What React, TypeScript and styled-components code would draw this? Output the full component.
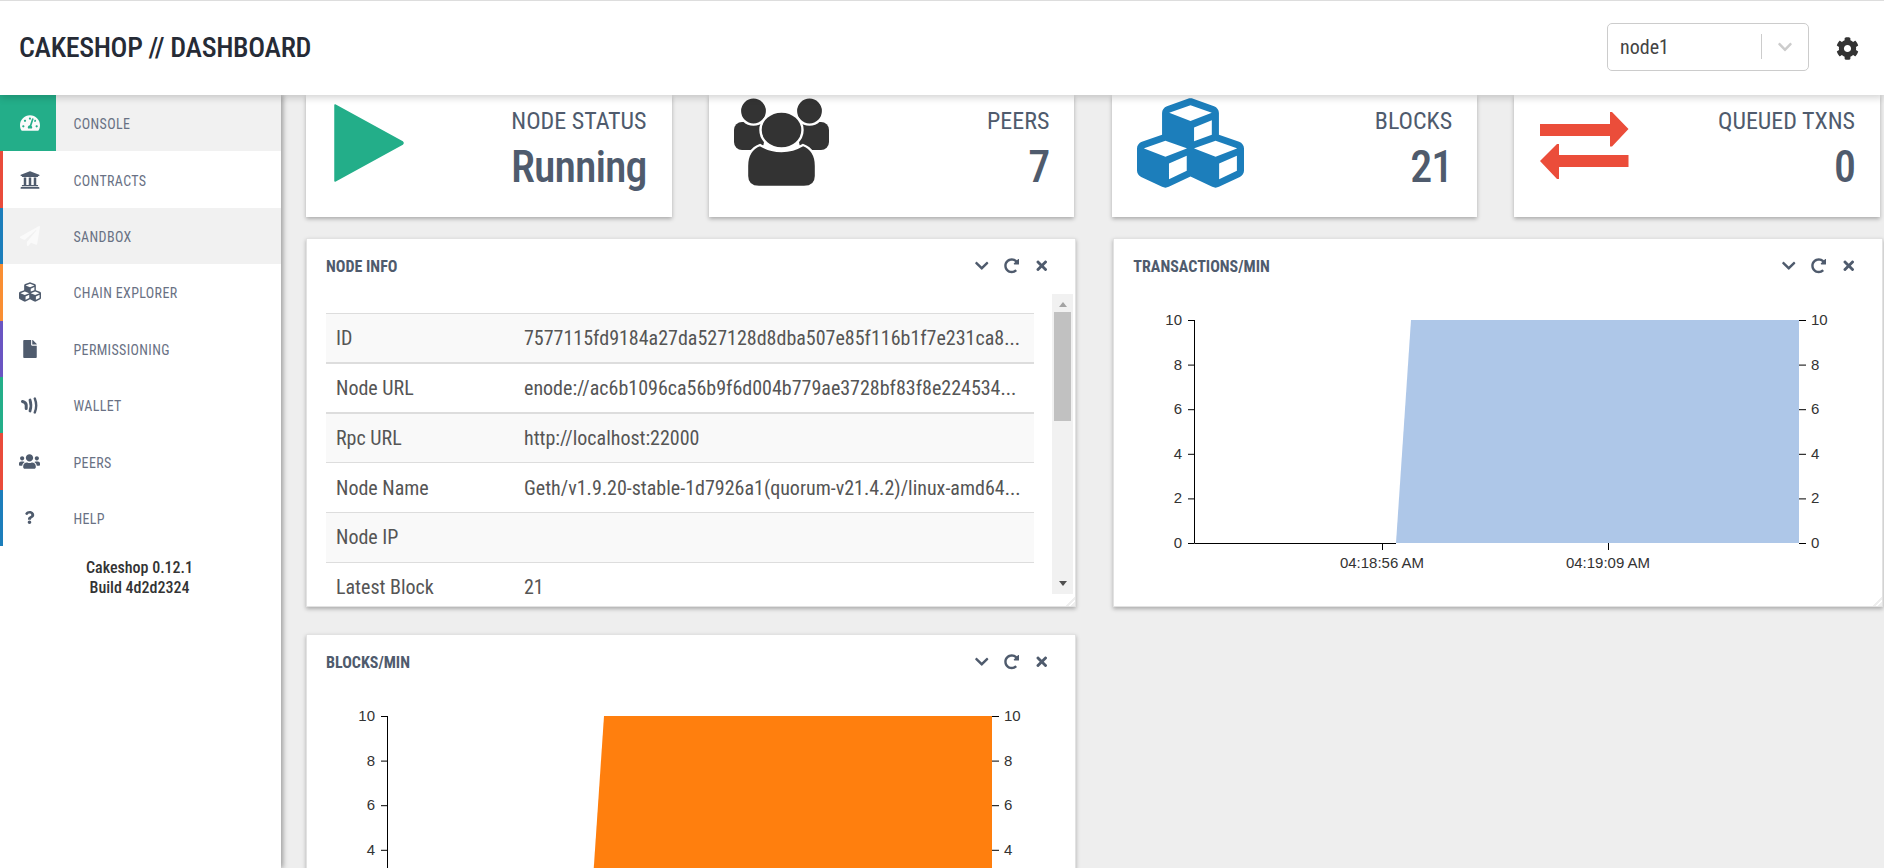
import type { ReactNode } from 'react';
import styled, { createGlobalStyle } from 'styled-components';
import {
  FaChevronDown,
  FaCog,
  FaCubes,
  FaFile,
  FaPaperPlane,
  FaQuestion,
  FaRedoAlt,
  FaTachometerAlt,
  FaTimes,
  FaUniversity,
  FaUsers,
} from 'react-icons/fa';

const GlobalStyle = createGlobalStyle`
  html, body {
    margin: 0;
    padding: 0;
    height: 100%;
    overflow: hidden;
    background: #eeeeee;
  }
  * { box-sizing: border-box; }
  body {
    font-family: Roboto, "Liberation Sans", sans-serif;
    font-stretch: 75%;
  }
`;

const WalletIcon = () => (
  <svg width="17" height="17" viewBox="0 0 17 17" fill="none" stroke="currentColor" strokeLinecap="round">
    <path d="M1.5 4.5 C3.5 5 5 6 5.2 8 L5.2 11.5" strokeWidth="3" />
    <path d="M9 3 C10.2 6.5 10.2 10.5 9 14" strokeWidth="2.8" />
    <path d="M13.8 1.5 C15.6 6 15.6 11 13.8 15.5" strokeWidth="2.4" />
  </svg>
);

const PlayIcon = () => (
  <svg width="70" height="78" viewBox="0 0 70 78">
    <path d="M1 1 L68.5 38 Q69.5 39 68.5 40 L1 77 Z" fill="#23ae89" stroke="#23ae89" strokeLinejoin="round" strokeWidth="1.5" />
  </svg>
);

const PeersIcon = () => (
  <svg width="95" height="90" viewBox="0 0 95 90" fill="#333333" stroke="#ffffff" strokeWidth="2.4">
    <rect x="0" y="24" width="30" height="28" rx="8" stroke="none" />
    <rect x="65" y="24" width="30" height="28" rx="8" stroke="none" />
    <circle cx="19.5" cy="13" r="13.6" />
    <circle cx="75.5" cy="13" r="13.6" />
    <path d="M13 68 Q13 52 26 47 Q36 53 47.5 53 Q59 53 69 47 Q82 52 82 68 V78 Q82 89 70 89 H25 Q13 89 13 78 Z" />
    <ellipse cx="47.5" cy="32" rx="21" ry="18.5" />
  </svg>
);

const ExchangeIcon = () => (
  <svg width="89" height="68" viewBox="0 0 89 68" fill="#eb4d3a">
    <polygon points="0,12 70,12 70,0 72,0 88.5,17 72,34.5 70,34.5 70,24 0,24" />
    <polygon points="88.5,43 19,43 19,32 17,32 0,49 17,67 19,67 19,55 88.5,55" />
  </svg>
);

type NavEntry = {
  label: string;
  color: string;
  icon: ReactNode;
  size?: number;
  shaded?: boolean;
  active?: boolean;
};

const NAV: NavEntry[] = [
  { label: 'Console', color: '#23ae89', icon: <FaTachometerAlt />, active: true, shaded: true },
  { label: 'Contracts', color: '#e94b3b', icon: <FaUniversity /> },
  { label: 'Sandbox', color: '#1c7ebb', icon: <FaPaperPlane />, shaded: true },
  { label: 'Chain Explorer', color: '#f98e33', icon: <FaCubes />, size: 22 },
  { label: 'Permissioning', color: '#6a55c2', icon: <FaFile />, size: 18 },
  { label: 'Wallet', color: '#23ae89', icon: <WalletIcon /> },
  { label: 'Peers', color: '#e94b3b', icon: <FaUsers />, size: 21 },
  { label: 'Help', color: '#1c7ebb', icon: <FaQuestion />, size: 13 },
];

const ROWS = [
  { name: 'ID', value: '7577115fd9184a27da527128d8dba507e85f116b1f7e231ca8...', thick: true },
  { name: 'Node URL', value: 'enode://ac6b1096ca56b9f6d004b779ae3728bf83f8e224534...', thick: true },
  { name: 'Rpc URL', value: 'http://localhost:22000' },
  { name: 'Node Name', value: 'Geth/v1.9.20-stable-1d7926a1(quorum-v21.4.2)/linux-amd64...' },
  { name: 'Node IP', value: '' },
  { name: 'Latest Block', value: '21' },
];

const PanelTools = () => (
  <Tools>
    <FaChevronDown />
    <FaRedoAlt />
    <FaTimes />
  </Tools>
);

type ChartProps = {
  fill: string;
  top: number;
  bottom: number;
  height: number;
  ticks?: { x: number; label: string }[];
};

const TICKS = [0, 2, 4, 6, 8, 10];

const AreaChart = ({ fill, top, bottom, height, ticks = [] }: ChartProps) => {
  const left = 80;
  const right = 685;
  const y0 = 26;
  const y1 = 249;
  const ty = (v: number) => y1 - ((y1 - y0) * v) / 10;
  return (
    <ChartSvg width="768" height={height} viewBox={`0 0 768 ${height}`}>
      <polygon points={`${bottom},${y1} ${top},${y0} ${right},${y0} ${right},${y1}`} fill={fill} />
      <path d={`M${left + 0.5} ${y0} V${y1 + 0.5} H${bottom}`} fill="none" stroke="#000" />
      {TICKS.map(v => (
        <g key={v}>
          <line x1={left - 6} x2={left} y1={ty(v) + 0.5} y2={ty(v) + 0.5} stroke="#000" />
          <text x={left - 12} y={ty(v) + 5} textAnchor="end">{v}</text>
          <line x1={right} x2={right + 7} y1={ty(v) + 0.5} y2={ty(v) + 0.5} stroke="#000" />
          <text x={right + 12} y={ty(v) + 5}>{v}</text>
        </g>
      ))}
      {ticks.map(t => (
        <g key={t.label}>
          <line x1={t.x + 0.5} x2={t.x + 0.5} y1={y1} y2={y1 + 7} stroke="#000" />
          <text x={t.x} y={y1 + 25} textAnchor="middle">{t.label}</text>
        </g>
      ))}
    </ChartSvg>
  );
};

const App = () => (
  <Page>
    <GlobalStyle />
    <Header>
      <Title>CAKESHOP // DASHBOARD</Title>
      <HeaderRight>
        <NodeSelect>
          <NodeName>node1</NodeName>
          <SelectDivider />
          <SelectArrow><FaChevronDown /></SelectArrow>
        </NodeSelect>
        <Gear><FaCog /></Gear>
      </HeaderRight>
    </Header>
    <Body>
      <Sidebar>
        <nav>
          {NAV.map(item => (
            <NavItem key={item.label} $color={item.color} $shaded={item.shaded}>
              <NavIcon
                $active={item.active}
                $color={item.color}
                $ghost={item.label === 'Sandbox'}
                $size={item.size}
              >
                {item.icon}
              </NavIcon>
              <NavLabel>{item.label}</NavLabel>
            </NavItem>
          ))}
        </nav>
        <Version>
          Cakeshop 0.12.1
          <br />
          Build 4d2d2324
        </Version>
      </Sidebar>
      <Main>
        <StatRow>
          <StatCard>
            <StatIcon $left={28} $top={9}><PlayIcon /></StatIcon>
            <StatText>
              <StatLabel>Node Status</StatLabel>
              <StatValue>Running</StatValue>
            </StatText>
          </StatCard>
          <StatCard>
            <StatIcon $left={25} $top={3}><PeersIcon /></StatIcon>
            <StatText>
              <StatLabel>Peers</StatLabel>
              <StatValue>7</StatValue>
            </StatText>
          </StatCard>
          <StatCard>
            <StatIcon $left={25} $top={-3}><CubesGlyph /></StatIcon>
            <StatText>
              <StatLabel>Blocks</StatLabel>
              <StatValue>21</StatValue>
            </StatText>
          </StatCard>
          <StatCard>
            <StatIcon $left={26} $top={17}><ExchangeIcon /></StatIcon>
            <StatText>
              <StatLabel>Queued Txns</StatLabel>
              <StatValue>0</StatValue>
            </StatText>
          </StatCard>
        </StatRow>
        <PanelGrid>
          <Panel $height={369}>
            <PanelHead>
              <PanelTitle>Node Info</PanelTitle>
              <PanelTools />
            </PanelHead>
            <InfoBody>
              <InfoClip>
                <InfoTable>
                  <tbody>
                    {ROWS.map(row => (
                      <InfoRow key={row.name} $thick={row.thick}>
                        <NameCell>{row.name}</NameCell>
                        <td>{row.value}</td>
                      </InfoRow>
                    ))}
                  </tbody>
                </InfoTable>
              </InfoClip>
              <ScrollTrack>
                <ScrollUp />
                <ScrollThumb />
                <ScrollDown />
              </ScrollTrack>
            </InfoBody>
            <ResizeCorner />
          </Panel>
          <Panel $height={369}>
            <PanelHead>
              <PanelTitle>Transactions/min</PanelTitle>
              <PanelTools />
            </PanelHead>
            <AreaChart
              fill="#aec7e8"
              top={297}
              bottom={282}
              height={290}
              ticks={[
                { x: 268, label: '04:18:56 AM' },
                { x: 494, label: '04:19:09 AM' },
              ]}
            />
            <ResizeCorner />
          </Panel>
          <Panel $height={369}>
            <PanelHead>
              <PanelTitle>Blocks/min</PanelTitle>
              <PanelTools />
            </PanelHead>
            <AreaChart fill="#ff7f0e" top={297} bottom={282} height={290} />
          </Panel>
        </PanelGrid>
      </Main>
    </Body>
  </Page>
);

const CubesGlyph = styled(FaCubes).attrs({ preserveAspectRatio: 'none' })`
  width: 107px;
  height: 102px;
  color: #1c7ebb;
`;

const Page = styled.div`
  height: 868px;
  width: 1884px;
  overflow: hidden;
  display: flex;
  flex-direction: column;
  background: #eeeeee;
  color: #333333;
`;

const Header = styled.header`
  height: 95px;
  flex: none;
  position: relative;
  z-index: 3;
  display: flex;
  align-items: center;
  justify-content: space-between;
  padding: 0 25px 0 19px;
  background: #ffffff;
  border-top: 1px solid #dddddd;
  box-shadow: 0 2px 8px rgba(0, 0, 0, 0.2);
`;

const Title = styled.h1`
  margin: 0;
  font-size: 28px;
  font-weight: 500;
  line-height: 1;
  letter-spacing: -0.35px;
  color: #262b36;
`;

const HeaderRight = styled.div`
  display: flex;
  align-items: center;
  gap: 27px;
`;

const NodeSelect = styled.div`
  width: 202px;
  height: 48px;
  margin-bottom: 3px;
  display: flex;
  align-items: center;
  padding-left: 12px;
  border: 1px solid #cccccc;
  border-radius: 5px;
`;

const NodeName = styled.span`
  flex: 1;
  font-size: 20px;
  font-weight: 400;
  color: #444444;
`;

const SelectDivider = styled.span`
  width: 1px;
  height: 25px;
  background: #cccccc;
`;

const SelectArrow = styled.span`
  width: 46px;
  display: flex;
  justify-content: center;
  font-size: 16px;
  color: #cccccc;
`;

const Gear = styled.span`
  display: flex;
  font-size: 23px;
  color: #333333;
`;

const Body = styled.div`
  flex: 1;
  min-height: 0;
  display: flex;
`;

const Sidebar = styled.aside`
  width: 281px;
  flex: none;
  position: relative;
  z-index: 2;
  background: #ffffff;
  box-shadow: 2px 0 5px rgba(0, 0, 0, 0.35);
`;

const NavItem = styled.a<{ $color: string; $shaded?: boolean }>`
  height: 56.4px;
  display: flex;
  align-items: center;
  border-left: 3px solid ${({ $color }) => $color};
  background: ${({ $shaded }) => ($shaded ? '#f1f1f1' : '#ffffff')};
`;

const NavIcon = styled.span<{ $active?: boolean; $color: string; $ghost?: boolean; $size?: number }>`
  width: 53px;
  height: 100%;
  flex: none;
  display: flex;
  align-items: center;
  justify-content: center;
  font-size: ${({ $size }) => $size || 20}px;
  background: ${({ $active, $color }) => ($active ? $color : 'transparent')};
  color: ${({ $active, $ghost }) => ($active || $ghost ? '#fafafa' : '#4f5b6d')};
`;

const NavLabel = styled.span`
  margin: 2px 0 0 17.5px;
  font-size: 14px;
  letter-spacing: 0.35px;
  text-transform: uppercase;
  color: #697184;
`;

const Version = styled.div`
  margin-top: 12px;
  padding-right: 2px;
  text-align: center;
  font-size: 16px;
  font-weight: 500;
  line-height: 20px;
  color: #333333;
`;

const Main = styled.main`
  flex: 1;
  min-width: 0;
  padding: 0 4px 0 25px;
`;

const StatRow = styled.div`
  display: grid;
  grid-template-columns: repeat(4, 1fr);
  column-gap: 37.33px;
  margin-bottom: 21px;
`;

const StatCard = styled.div`
  position: relative;
  height: 122px;
  display: flex;
  justify-content: flex-end;
  padding: 13px 25px 0 0;
  background: #ffffff;
  box-shadow: 0 2px 4px rgba(0, 0, 0, 0.28);
`;

const StatIcon = styled.span<{ $left: number; $top: number }>`
  position: absolute;
  left: ${({ $left }) => $left}px;
  top: ${({ $top }) => $top}px;
  display: flex;
`;

const StatText = styled.div`
  text-align: right;
`;

const StatLabel = styled.div`
  font-size: 24px;
  line-height: 27px;
  text-transform: uppercase;
  color: #4f5b6d;
`;

const StatValue = styled.div`
  margin-top: 6px;
  font-size: 44px;
  font-weight: 500;
  line-height: 52px;
  letter-spacing: -1px;
  color: #4f5b6d;
`;

const PanelGrid = styled.div`
  display: grid;
  grid-template-columns: repeat(2, 1fr);
  column-gap: 37.33px;
  row-gap: 27px;
`;

const Panel = styled.section<{ $height: number }>`
  position: relative;
  height: ${({ $height }) => $height}px;
  background: #ffffff;
  border: 1px solid #e2e2e2;
  box-shadow: 0 2px 4px rgba(0, 0, 0, 0.28);
`;

const PanelHead = styled.div`
  height: 54px;
  margin-bottom: 1px;
  display: flex;
  align-items: center;
  justify-content: space-between;
  padding: 0 26px 0 19px;
`;

const PanelTitle = styled.h3`
  margin: 0;
  font-size: 16px;
  font-weight: 700;
  text-transform: uppercase;
  color: #4f5b6d;
`;

const Tools = styled.div`
  display: flex;
  align-items: center;
  gap: 14.5px;
  font-size: 15.5px;
  color: #4f5b6d;
`;

const InfoBody = styled.div`
  height: 301px;
  display: flex;
  padding-left: 19px;
`;

const InfoClip = styled.div`
  width: 708px;
  height: 300px;
  overflow: hidden;
  padding-top: 19px;
`;

const InfoTable = styled.table`
  width: 100%;
  border-collapse: collapse;
  font-size: 20px;
  color: #555555;
  td { padding: 0 10px; height: 49.75px; }
`;

const InfoRow = styled.tr<{ $thick?: boolean }>`
  border-top: 1px solid #dddddd;
  border-bottom: ${({ $thick }) => ($thick ? '2px solid #dddddd' : '0')};
  &:nth-child(odd) { background: #f9f9f9; }
`;

const NameCell = styled.td`
  width: 188px;
`;

const ScrollTrack = styled.div`
  width: 21px;
  height: 300px;
  margin-left: 18px;
  padding: 0 2px;
  display: flex;
  flex-direction: column;
  background: #f1f1f1;
`;

const ScrollUp = styled.span`
  width: 0;
  height: 0;
  margin: 8px auto 5px;
  border: 4px solid transparent;
  border-top: 0;
  border-bottom: 5px solid #a3a3a3;
`;

const ScrollThumb = styled.span`
  height: 109px;
  background: #c1c1c1;
`;

const ScrollDown = styled.span`
  width: 0;
  height: 0;
  margin: auto auto 8px;
  border: 4px solid transparent;
  border-bottom: 0;
  border-top: 5px solid #505050;
`;

const ResizeCorner = styled.span`
  position: absolute;
  right: 0;
  bottom: 0;
  width: 10px;
  height: 10px;
  background: linear-gradient(135deg, transparent 55%, #eeeeee 55%, #eeeeee 70%, transparent 70%, transparent 80%, #eeeeee 80%);
`;

const ChartSvg = styled.svg`
  display: block;
  text {
    font-size: 15px;
    fill: #333333;
    font-family: "Liberation Sans", sans-serif;
  }
`;

export default App;
